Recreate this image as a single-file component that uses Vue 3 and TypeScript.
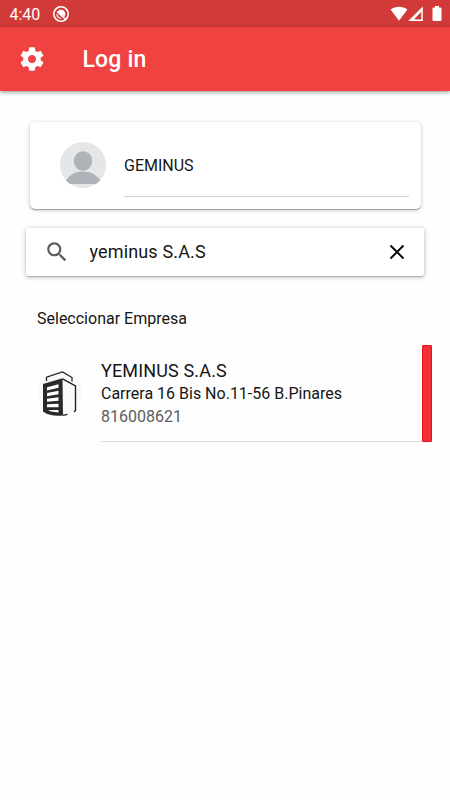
<script setup lang="ts">
interface Company {
  name: string
  address: string
  nit: string
}

const user: string = 'GEMINUS'
const query: string = 'yeminus S.A.S'
const companies: Company[] = [
  { name: 'YEMINUS S.A.S', address: 'Carrera 16 Bis No.11-56 B.Pinares', nit: '816008621' },
]
</script>

<template>
  <div class="screen">
    <div class="status">
      <span class="time">4:40</span>
      <svg class="notif" width="18" height="18" viewBox="0 0 18 18">
        <circle cx="9" cy="9" r="7.2" fill="none" stroke="#fff" stroke-width="1.6" />
        <path d="M5.400 6.800C7.500 3.800 12.300 4.300 13.200 8.200Q13.500 10.500 12.200 12.300Z" fill="#fff" />
        <path d="M4.900 9.200A4.200 4.200 0 0 0 9 13.300M5 6.800L14 14.800" fill="none" stroke="#fff" stroke-width="1.3" />
      </svg>
      <div class="signals">
        <svg width="18" height="16" viewBox="0 0 18 16">
          <path d="M0.6 3.6C5.4-.2 12.6-.2 17.4 3.6L9 14.8Z" fill="#fff" />
        </svg>
        <svg width="16" height="16" viewBox="0 0 16 16">
          <path fill-rule="evenodd" d="M14.800 .4V15H.2ZM13.300 5.700L6.600 12.800V13.400H13.300Z" fill="#fff" />
          <path d="M12.300 7.700V12.500H7.900Z" fill="#d23a39" stroke="#d23a39" stroke-width=".5" />
        </svg>
        <svg class="battery" width="10" height="16" viewBox="0 0 10 16">
          <path d="M3 0H7V1.6H8.4Q9.5 1.6 9.5 2.7V14Q9.5 15.1 8.4 15.1H1.6Q.5 15.1 .5 14V2.7Q.5 1.6 1.6 1.6H3Z" fill="#fff" />
        </svg>
      </div>
    </div>

    <header class="toolbar">
      <svg class="gear" width="28" height="28" viewBox="0 0 24 24">
        <path fill="#fff" d="M19.43 12.98c.04-.32.07-.64.07-.98s-.03-.66-.07-.98l2.11-1.65c.19-.15.24-.42.12-.64l-2-3.46c-.12-.22-.39-.3-.61-.22l-2.49 1c-.52-.4-1.08-.73-1.69-.98l-.38-2.65C14.46 2.18 14.25 2 14 2h-4c-.25 0-.46.18-.49.42l-.38 2.65c-.61.25-1.17.59-1.69.98l-2.49-1c-.23-.09-.49 0-.61.22l-2 3.46c-.13.22-.07.49.12.64l2.11 1.65c-.04.32-.07.65-.07.98s.03.66.07.98l-2.11 1.65c-.19.15-.24.42-.12.64l2 3.46c.12.22.39.3.61.22l2.49-1c.52.4 1.08.73 1.69.98l.38 2.65c.03.24.24.42.49.42h4c.25 0 .46-.18.49-.42l.38-2.65c.61-.25 1.17-.59 1.69-.98l2.49 1c.23.09.49 0 .61-.22l2-3.46c.12-.22.07-.49-.12-.64l-2.11-1.65zM12 15.5c-1.93 0-3.5-1.57-3.5-3.5s1.57-3.5 3.5-3.5 3.5 1.57 3.5 3.5-1.57 3.5-3.5 3.5z" />
      </svg>
      <h1>Log in</h1>
    </header>

    <main>
      <section class="user-card">
        <svg class="avatar" width="46" height="46" viewBox="0 0 46 46">
          <defs>
            <clipPath id="avatarClip"><circle cx="23" cy="23" r="23" /></clipPath>
          </defs>
          <circle cx="23" cy="23" r="23" fill="#e4e6e8" />
          <g clip-path="url(#avatarClip)" fill="#adb3b8">
            <ellipse cx="23" cy="19" rx="9.2" ry="9.8" />
            <path d="M4 42C7.500 34 14 29.600 23 29.600S38.500 34 42 42Z" />
          </g>
        </svg>
        <div class="user-name"><span>{{ user }}</span></div>
      </section>

      <section class="search">
        <svg width="26" height="26" viewBox="0 0 24 24">
          <path fill="#5b5b5b" d="M15.500 14h-.79l-.28-.27C15.410 12.590 16 11.110 16 9.500 16 5.910 13.090 3 9.500 3S3 5.910 3 9.500 5.910 16 9.500 16c1.610 0 3.090-.59 4.230-1.570l.27.28v.79l5 4.990L20.490 19l-4.990-5zm-6 0C7.010 14 5 11.990 5 9.500S7.010 5 9.500 5 14 7.010 14 9.500 11.990 14 9.500 14z" />
        </svg>
        <span class="query">{{ query }}</span>
        <svg class="clear" width="16" height="16" viewBox="0 0 16 16">
          <path d="M1.500 1.500L14.500 14.500M14.500 1.500L1.500 14.500" stroke="#000" stroke-width="1.9" fill="none" />
        </svg>
      </section>

      <h2>Seleccionar Empresa</h2>

      <article v-for="company in companies" :key="company.nit" class="company">
        <svg class="building" width="46" height="46" viewBox="0 0 46 46">
          <circle cx="23" cy="23" r="22.500" fill="#fafafa" />
          <path d="M9.500 11V7.200L25.500 2L35 7.500V11.500" fill="none" stroke="#222" stroke-width="1.300" />
          <path d="M6 14L25.500 8.200L26 45.500Q14 47 6 41.500Z" fill="#29292b" />
          <path d="M25.500 8.800L38.500 16V40.500L37 42" fill="none" stroke="#222" stroke-width="1.400" />
          <path d="M26 45.300L30.500 44.300" stroke="#222" stroke-width="1.200" />
          <path d="M10 17.200L21.500 14.200V17.700L10 20.400ZM10 23L21.500 20.800V24.200L10 26.200ZM10 28.800L21.500 27.300V30.800L10 31.700ZM10 34.300L21.500 33.700V37.200L10 37.200ZM11 40H21.500V42.600L14 41.600Z" fill="#fff" />
        </svg>
        <div class="details">
          <span class="name">{{ company.name }}</span>
          <span class="address">{{ company.address }}</span>
          <span class="nit">{{ company.nit }}</span>
        </div>
        <div class="marker"></div>
      </article>
    </main>
  </div>
</template>

<style>
body {
  background: #fff;
}
</style>

<style scoped>
.screen {
  width: 450px;
  height: 800px;
  overflow: hidden;
  background: #fefefe;
  font-family: Roboto, sans-serif;
  color: #151515;
}
.status {
  display: flex;
  align-items: center;
  height: 27px;
  padding: 0 8px 0 9.500px;
  background: #d23a39;
  color: #fff;
}
.time {
  width: 42.500px;
  font-size: 16px;
  line-height: 27px;
  padding-top: 2px;
}
.signals {
  display: flex;
  align-items: center;
  margin-left: auto;
  margin-right: 0.500px;
}
.battery {
  margin-left: 7.500px;
}
.toolbar {
  display: flex;
  align-items: center;
  height: 64px;
  padding-left: 18px;
  background: #f04241;
  box-shadow: 0 1px 4px rgba(0, 0, 0, 0.45);
}
h1 {
  margin: 0 0 0 36.500px;
  padding-top: 2px;
  color: #fff;
  font-size: 23px;
  font-weight: 500;
  letter-spacing: 0.2px;
  line-height: 62px;
}
.user-card {
  display: flex;
  box-sizing: border-box;
  width: 391px;
  height: 87px;
  margin: 31px 0 0 30px;
  padding: 20px 12px 12px 29.500px;
  border-radius: 5px;
  background: #fff;
  box-shadow: 0 1px 1px rgba(0, 0, 0, 0.3), 0 1px 4px rgba(0, 0, 0, 0.22);
}
.avatar {
  flex: none;
}
.user-name {
  flex: 1;
  margin-left: 18.500px;
  border-bottom: 1px solid #d4d4d4;
  font-size: 16px;
  line-height: 47px;
}
.search {
  display: flex;
  align-items: center;
  box-sizing: border-box;
  width: 398px;
  height: 48px;
  margin: 19px 0 0 26px;
  padding: 0 19.500px 0 18px;
  border-radius: 2px;
  background: #fff;
  box-shadow: 0 1px 1px rgba(0, 0, 0, 0.18), 0 1px 5px rgba(0, 0, 0, 0.28);
}
.query {
  margin-left: 19.500px;
  font-size: 18px;
  letter-spacing: 0.15px;
  line-height: 48px;
}
.clear {
  margin-left: auto;
}
h2 {
  margin: 32px 0 0 37px;
  font-size: 16px;
  font-weight: 400;
  line-height: 22px;
}
.company {
  display: flex;
  align-items: stretch;
  height: 97px;
  margin: 15px 18px 0 37px;
}
.building {
  flex: none;
  margin-top: 25px;
}
.details {
  display: flex;
  flex: 1;
  flex-direction: column;
  box-sizing: border-box;
  margin-left: 18px;
  padding-top: 14px;
  border-bottom: 1px solid #dedede;
}
.name {
  font-size: 18px;
  letter-spacing: 0.15px;
  line-height: 23px;
}
.address {
  font-size: 16px;
  line-height: 24px;
}
.nit {
  color: #5c5c5c;
  font-size: 16px;
  line-height: 22px;
}
.marker {
  box-sizing: border-box;
  width: 10px;
  border: 1px solid #ee1015;
  border-radius: 1px;
  background: #ee3137;
}
</style>
